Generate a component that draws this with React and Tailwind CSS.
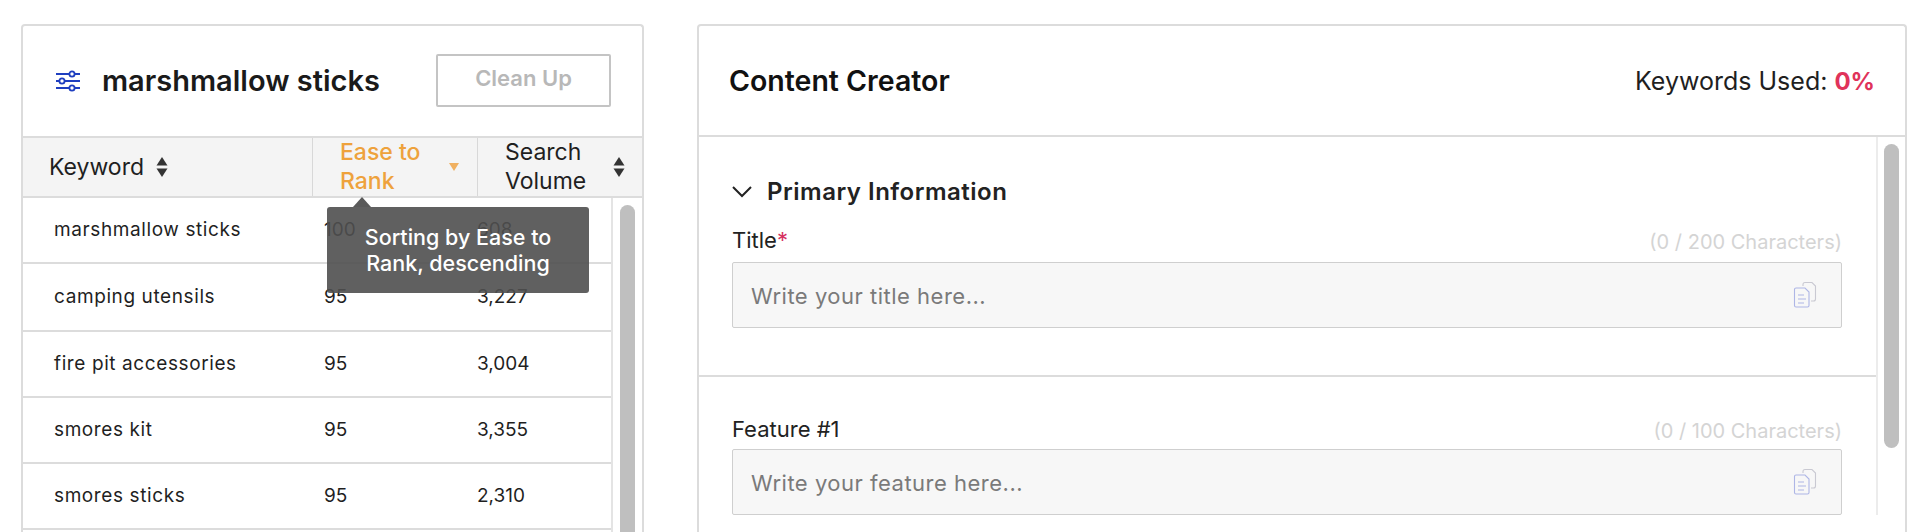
import React from "react";

const rows = [
  ["marshmallow sticks", "100", "608", "h-[66px]"],
  ["camping utensils", "95", "3,227", "h-[68px]"],
  ["fire pit accessories", "95", "3,004", "h-[66px]"],
  ["smores kit", "95", "3,355", "h-[66px]"],
  ["smores sticks", "95", "2,310", "h-[66px]"],
  ["", "", "", "h-[66px]"],
];

function SortIcon({ className }) {
  return (
    <svg width="12" height="22" viewBox="0 0 12 22" className={className} fill="currentColor">
      <path d="M6 1 11.500 9.500H.5Z" />
      <path d="M6 21 .5 12.500h11Z" />
    </svg>
  );
}

function SlidersIcon() {
  return (
    <svg width="26" height="22" viewBox="0 0 26 22" fill="none" stroke="#1f3fc0" strokeWidth="1.8">
      <path d="M1 4h24M1 11h24M1 18h24" />
      <circle cx="17" cy="4" r="2.6" fill="#fff" />
      <circle cx="7" cy="11" r="2.6" fill="#fff" />
      <circle cx="17" cy="18" r="2.6" fill="#fff" />
    </svg>
  );
}

function CopyIcon() {
  return (
    <svg width="24" height="28" viewBox="0 0 24 28" fill="none" strokeWidth="1.1">
      <path d="M10 5V3.500C10 2.500 11 1.500 12 1.500h7l3.500 3.500v13c0 1-1 2-2 2H18" stroke="#c9c9d2" />
      <path d="M3 7h9l4 4v13.500c0 .8-.7 1.500-1.500 1.500H3c-.8 0-1.500-.7-1.500-1.500v-16C1.500 7.700 2.200 7 3 7Z" stroke="#aeb6e6" />
      <path d="M5 14h6M5 18h8M5 22h6" stroke="#aeb6e6" />
    </svg>
  );
}

function Field({ label, required, count, placeholder, gap }) {
  return (
    <div>
      <div className="flex items-center justify-between h-[22px]">
        <span className="text-[22px] text-[#222]">
          {label}
          {required && <span className="text-[#d6305f]">*</span>}
        </span>
        <span className="pt-[3px] text-[20px] text-[#d4d4d4]">{count}</span>
      </div>
      <div className={`${gap} flex h-[66px] items-center justify-between border border-[#cfcfcf] rounded-[2px] bg-[#f7f7f7] pl-[18px] pr-[24px]`}>
        <span className="pt-[2px] text-[22px] tracking-[0.5px] text-[#7a7a7a]">{placeholder}</span>
        <CopyIcon />
      </div>
    </div>
  );
}

export default function App() {
  return (
    <div className="flex h-[532px] gap-[53px] overflow-hidden bg-white pl-[21px] pt-[24px] font-['Inter','Liberation_Sans',sans-serif] text-[#1f1f1f]">
      {/* Keyword table */}
      <div className="relative h-[560px] w-[623px] shrink-0 rounded-[4px] border-2 border-[#dcdcdc] border-b-0">
        <div className="flex h-[110px] items-center justify-between pl-[32px] pr-[31px]">
          <div className="flex items-center gap-[21px]">
            <SlidersIcon />
            <h2 className="text-[29px] font-semibold text-[#1a1a1a]">marshmallow sticks</h2>
          </div>
          <button className="mb-[2px] h-[53px] w-[175px] rounded-[2px] border-2 border-[#c4c4c4] pb-[3px] text-[22px] font-semibold text-[#b8b8b8]">
            Clean Up
          </button>
        </div>
        <div className="flex h-[62px] border-y-2 border-[#dcdcdc] bg-[#f4f4f4] text-[23px] leading-[29px]">
          <div className="flex w-[289px] items-center gap-[12px] pl-[26px]">
            Keyword
            <SortIcon className="text-[#333]" />
          </div>
          <div className="flex w-[165px] items-center justify-between border-l border-[#d8d8d8] pl-[27px] pr-[18px] font-medium text-[#eea23c]">
            <span className="w-[96px]">Ease to Rank</span>
            <svg width="10" height="8" viewBox="0 0 10 8" fill="#f0b060">
              <path d="M5 8 0 0h10Z" />
            </svg>
          </div>
          <div className="flex flex-1 items-center justify-between border-l border-[#d8d8d8] pl-[27px] pr-[17px]">
            <span className="w-[96px]">Search Volume</span>
            <SortIcon className="text-[#333]" />
          </div>
        </div>
        <div className="flex">
          <div className="w-[594px] border-r-2 border-[#e4e4e4]">
            {rows.map((row, i) => (
              <div key={i} className={`${row[3]} flex items-center border-b-2 border-[#dcdcdc] pt-[1px] text-[19px]`}>
                <div className="w-[301px] pl-[31px] tracking-[0.6px]">{row[0]}</div>
                <div className="w-[153px]">{row[1]}</div>
                <div>{row[2]}</div>
              </div>
            ))}
          </div>
          <div className="flex-1 px-[7px] pt-[7px]">
            <div className="h-[400px] w-[15px] rounded-full bg-[#bfbfbf]" />
          </div>
        </div>
        {/* Sort tooltip */}
        <div className="absolute left-[304px] top-[181px] w-[262px] rounded-[3px] bg-[#4f4f4f]/90 px-[24px] py-[17px] text-center text-[21.500px] font-medium leading-[26px] text-white">
          <div className="absolute -top-[10px] left-[26px] h-0 w-0 border-x-[9px] border-b-[10px] border-x-transparent border-b-[#5a5a5a]" />
          Sorting by Ease to Rank, descending
        </div>
      </div>

      {/* Content creator */}
      <div className="h-[560px] w-[1210px] shrink-0 rounded-[4px] border-2 border-[#dcdcdc] border-b-0">
        <div className="flex h-[111px] items-center justify-between border-b-2 border-[#dcdcdc] pl-[30px] pr-[30px] pt-[2px]">
          <h2 className="text-[28.500px] font-semibold text-[#111]">Content Creator</h2>
          <div className="text-[25px]">
            Keywords Used: <span className="text-[24px] font-bold text-[#e0335a]">0%</span>
          </div>
        </div>
        <div className="flex">
          <div className="w-[1181px] border-r-2 border-[#ececec]">
            <div className="border-b-2 border-[#dcdcdc] pl-[33px] pr-[34px] pt-[39px] pb-[47px]">
              <div className="flex h-[32px] items-center gap-[15px] text-[24px] tracking-[0.5px] font-semibold text-[#222]">
                <svg width="20" height="12" viewBox="0 0 20 12" fill="none" stroke="#222" strokeWidth="2">
                  <path d="M1 1l9 9 9-9" />
                </svg>
                Primary Information
              </div>
              <div className="mt-[21px]">
                <Field label="Title" required count="(0 / 200 Characters)" placeholder="Write your title here..." gap="mt-[11px]" />
              </div>
            </div>
            <div className="pl-[33px] pr-[34px] pt-[41px]">
              <Field label="Feature #1" count="(0 / 100 Characters)" placeholder="Write your feature here..." gap="mt-[9px]" />
            </div>
          </div>
          <div className="flex-1 px-[6px] pt-[7px]">
            <div className="h-[304px] w-[15px] rounded-full bg-[#bfbfbf]" />
          </div>
        </div>
      </div>
    </div>
  );
}
